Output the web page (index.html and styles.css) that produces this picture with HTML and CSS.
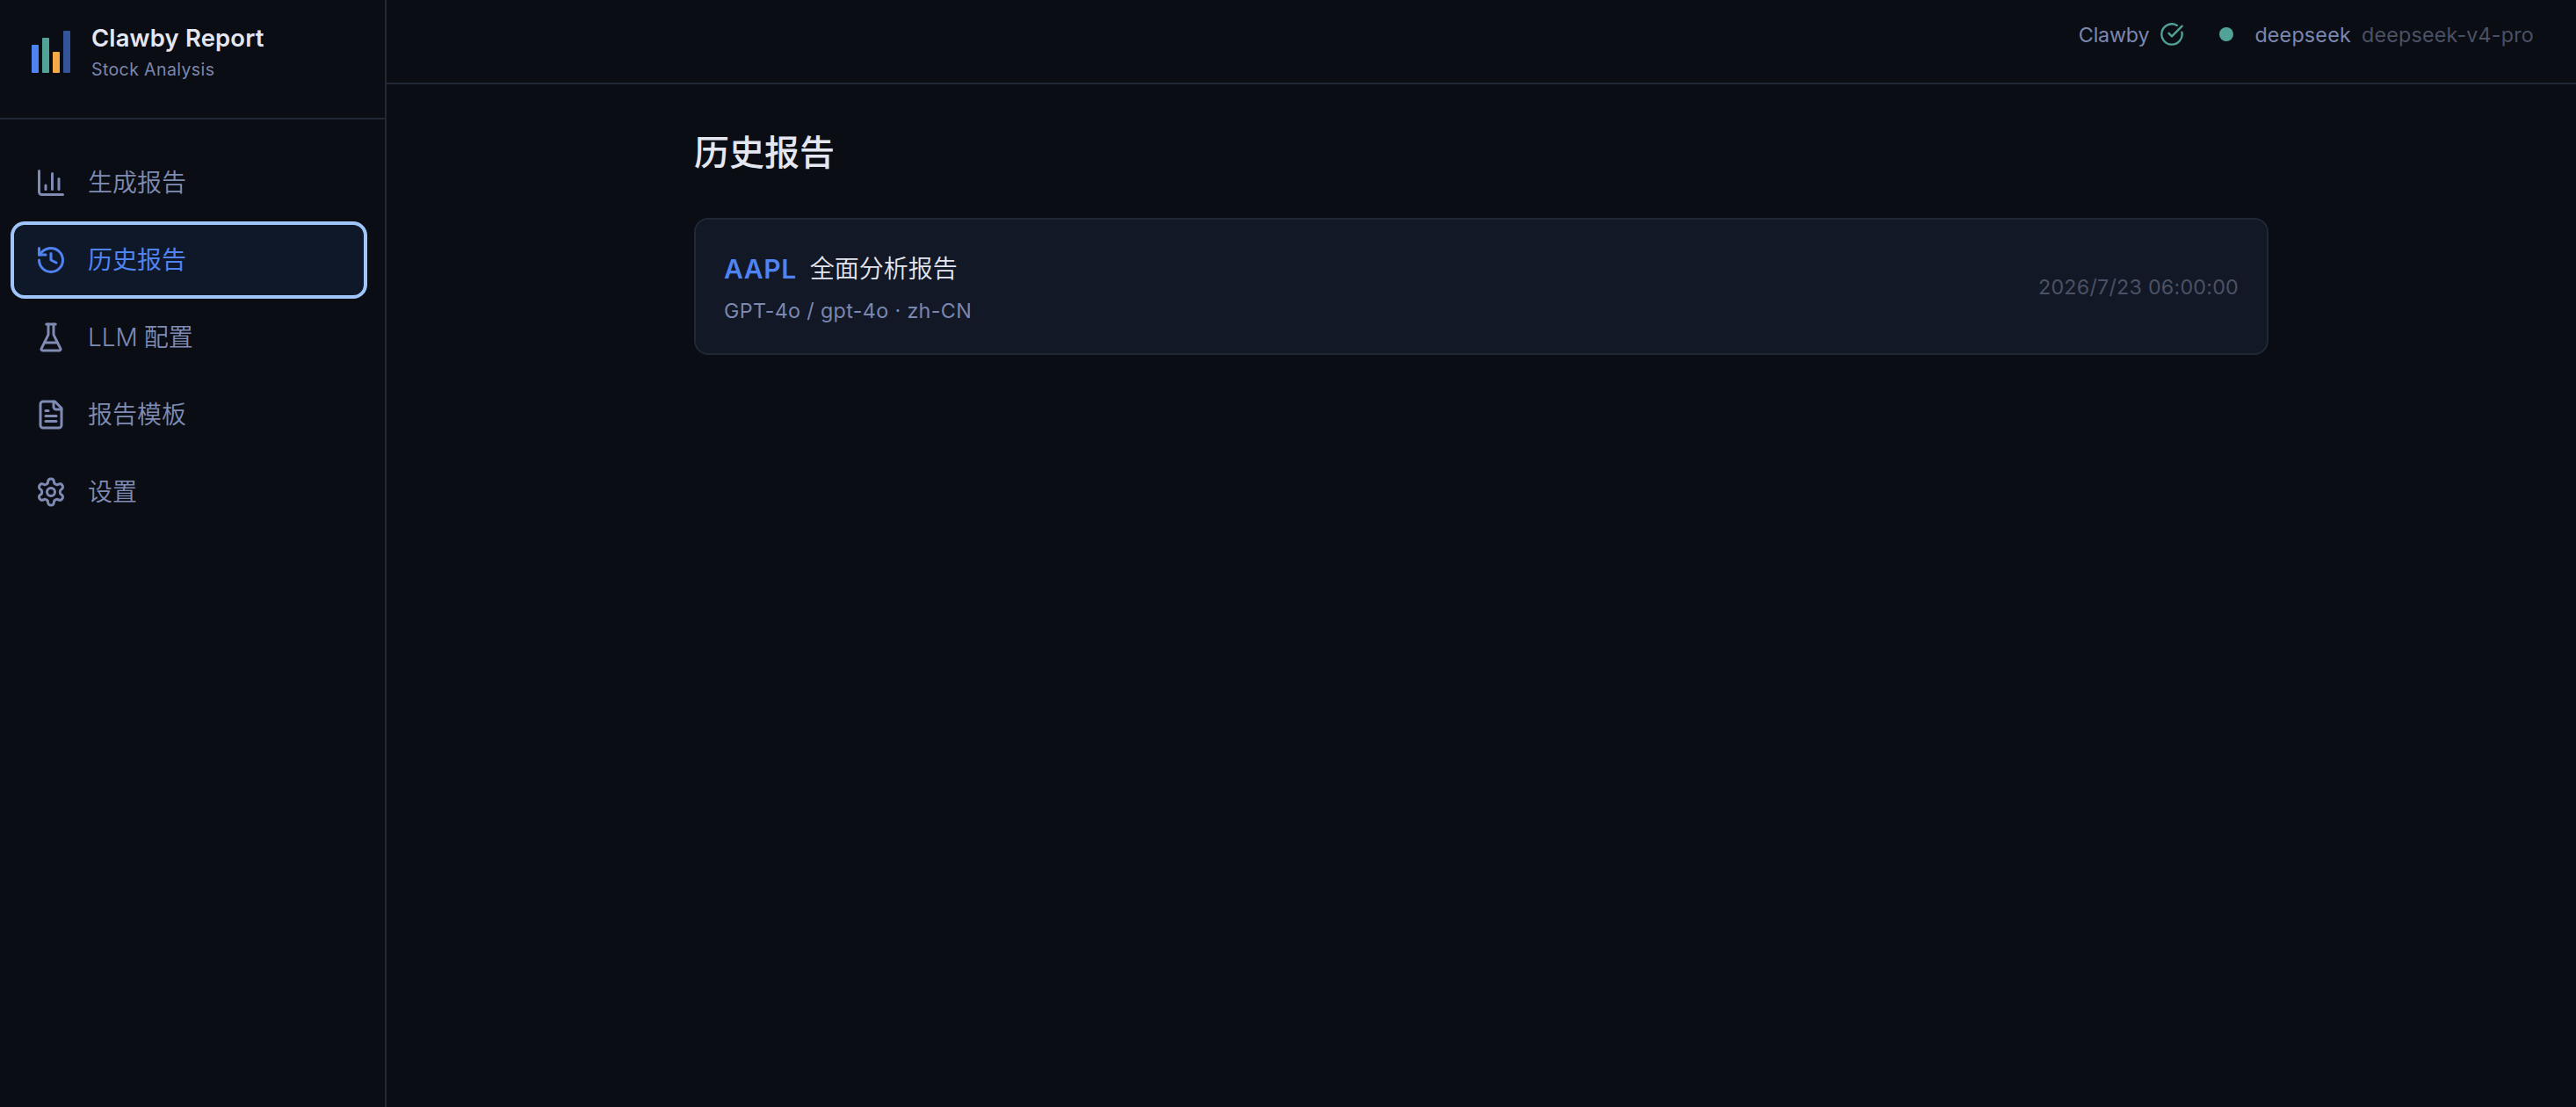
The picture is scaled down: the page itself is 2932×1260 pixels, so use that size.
FILE: index.html
```html
<!DOCTYPE html>
<html lang="zh-CN">
<head>
<meta charset="utf-8">
<title>Clawby Report</title>
<link rel="stylesheet" href="styles.css">
</head>
<body>
<div class="app">
  <aside class="sidebar">
    <div class="brand">
      <svg class="brand-logo" viewBox="0 0 44 48">
        <rect x="0" y="16" width="8" height="32" rx="1" fill="#4f83f1"/>
        <rect x="12" y="8" width="8" height="40" rx="1" fill="#52a397"/>
        <rect x="24" y="24" width="8" height="24" rx="1" fill="#f4ab47"/>
        <rect x="36" y="0" width="8" height="48" rx="1" fill="#335499"/>
      </svg>
      <div class="brand-text">
        <div class="brand-name">Clawby Report</div>
        <div class="brand-sub">Stock Analysis</div>
      </div>
    </div>
    <nav class="nav">
      <a class="nav-item">
        <svg class="icon" viewBox="0 0 24 24"><path d="M3 3v16a2 2 0 0 0 2 2h16"/><path d="M18 17V9"/><path d="M13 17V5"/><path d="M8 17v-3"/></svg>
        <span class="nav-label">生成报告</span>
      </a>
      <a class="nav-item nav-item-active">
        <svg class="icon" viewBox="0 0 24 24"><path d="M3 12a9 9 0 1 0 9-9 9.75 9.75 0 0 0-6.74 2.74L3 8"/><path d="M3 3v5h5"/><path d="M12 7v5l4 2"/></svg>
        <span class="nav-label">历史报告</span>
      </a>
      <a class="nav-item">
        <svg class="icon" viewBox="0 0 24 24"><path d="M10 2v7.527a2 2 0 0 1-.211.896L4.72 20.55a1 1 0 0 0 .9 1.45h12.76a1 1 0 0 0 .9-1.45l-5.069-10.127A2 2 0 0 1 14 9.527V2"/><path d="M8.5 2h7"/><path d="M7 16h10"/></svg>
        <span class="nav-label">LLM 配置</span>
      </a>
      <a class="nav-item">
        <svg class="icon" viewBox="0 0 24 24"><path d="M15 2H6a2 2 0 0 0-2 2v16a2 2 0 0 0 2 2h12a2 2 0 0 0 2-2V7Z"/><path d="M14 2v4a2 2 0 0 0 2 2h4"/><path d="M10 9H8"/><path d="M16 13H8"/><path d="M16 17H8"/></svg>
        <span class="nav-label">报告模板</span>
      </a>
      <a class="nav-item">
        <svg class="icon" viewBox="0 0 24 24"><path d="M12.22 2h-.44a2 2 0 0 0-2 2v.18a2 2 0 0 1-1 1.73l-.43.25a2 2 0 0 1-2 0l-.15-.08a2 2 0 0 0-2.73.73l-.22.38a2 2 0 0 0 .73 2.73l.15.1a2 2 0 0 1 1 1.72v.51a2 2 0 0 1-1 1.74l-.15.09a2 2 0 0 0-.73 2.73l.22.38a2 2 0 0 0 2.73.73l.15-.08a2 2 0 0 1 2 0l.43.25a2 2 0 0 1 1 1.73V20a2 2 0 0 0 2 2h.44a2 2 0 0 0 2-2v-.18a2 2 0 0 1 1-1.73l.43-.25a2 2 0 0 1 2 0l.15.08a2 2 0 0 0 2.73-.73l.22-.39a2 2 0 0 0-.73-2.73l-.15-.08a2 2 0 0 1-1-1.74v-.5a2 2 0 0 1 1-1.74l.15-.09a2 2 0 0 0 .73-2.73l-.22-.38a2 2 0 0 0-2.73-.73l-.15.08a2 2 0 0 1-2 0l-.43-.25a2 2 0 0 1-1-1.73V4a2 2 0 0 0-2-2z"/><circle cx="12" cy="12" r="3"/></svg>
        <span class="nav-label">设置</span>
      </a>
    </nav>
  </aside>
  <div class="content">
    <header class="topbar">
      <div class="status">
        <span class="status-name">Clawby</span>
        <svg class="icon status-icon" viewBox="0 0 24 24"><path d="M21.801 10A10 10 0 1 1 17 3.335"/><path d="m9 11 3 3L22 4"/></svg>
      </div>
      <div class="model">
        <span class="dot"></span>
        <span class="provider">deepseek</span>
        <span class="model-name">deepseek-v4-pro</span>
      </div>
    </header>
    <main class="page">
      <h1 class="page-title">历史报告</h1>
      <article class="card">
        <div class="card-body">
          <div class="card-head"><span class="ticker">AAPL</span><span class="card-title">全面分析报告</span></div>
          <div class="card-meta">GPT-4o / gpt-4o · zh-CN</div>
        </div>
        <time class="card-time">2026/7/23 06:00:00</time>
      </article>
    </main>
  </div>
</div>
</body>
</html>
```
FILE: styles.css
```css
* { box-sizing: border-box; }

body {
  margin: 0;
  background: #0a0d14;
  color: #e4e7f1;
  font-family: Inter, "Noto Sans CJK SC", sans-serif;
  font-size: 28px;
}

.app { display: flex; height: 1260px; }

.sidebar {
  flex: none;
  width: 440px;
  border-right: 2px solid #202835;
}

.brand {
  display: flex;
  gap: 24px;
  height: 136px;
  padding: 23px 36px 0;
  border-bottom: 2px solid #202835;
}

.brand-logo { width: 44px; height: 48px; margin-top: 12px; }
.brand-name { font-weight: 600; font-size: 27.4px; line-height: 40px; letter-spacing: 0.18px; }
.brand-sub { color: #7b87ae; font-size: 19.5px; line-height: 32px; letter-spacing: 0.4px; }

.nav { display: flex; flex-direction: column; gap: 8px; padding: 32px 24px 0 16px; }

.nav-item {
  display: flex;
  align-items: center;
  gap: 24px;
  height: 80px;
  padding: 0 24px;
  border-radius: 12px;
  color: #7f8bb3;
}

.nav-label { padding-bottom: 4px; font-weight: 350; word-spacing: -1px; }

.nav-item-active {
  background: #0f1829;
  color: #4f83f1;
  outline: 4px solid #9fc5fb;
}
.nav-item-active .nav-label { font-weight: 400; }

.icon {
  flex: none;
  width: 36px;
  height: 36px;
  fill: none;
  stroke: currentColor;
  stroke-width: 2;
  stroke-linecap: round;
  stroke-linejoin: round;
}

.content { flex: 1; min-width: 0; }

.topbar {
  display: flex;
  justify-content: flex-end;
  gap: 40px;
  height: 96px;
  padding: 21px 48px 0;
  border-bottom: 2px solid #202835;
  font-size: 23.3px;
  line-height: 36px;
  letter-spacing: 0.2px;
  color: #7b87ae;
}

.status, .model { display: flex; align-items: center; height: 36px; }
.status { gap: 12px; }
.status-name { letter-spacing: -0.2px; }
.status-name, .provider, .model-name { padding-top: 1px; }
.status-icon { width: 28px; height: 28px; color: #52a397; }
.dot { width: 16px; height: 16px; border-radius: 50%; background: #52a397; margin-right: 24px; }
.provider { margin-right: 12px; }
.model-name { color: #4a5164; }

.page { width: 1792px; margin: 0 auto; padding-top: 48px; }
.page-title { margin: 0 0 44px; font-size: 40px; line-height: 60px; font-weight: 500; }

.card {
  display: flex;
  align-items: center;
  justify-content: space-between;
  height: 156px;
  padding: 0 32px;
  border: 2px solid #202835;
  border-radius: 16px;
  background: #121825;
}

.card-body { padding-top: 4px; }
.card-head { display: flex; align-items: center; gap: 15px; line-height: 44px; }
.ticker { color: #4f83f1; font-size: 30px; font-weight: 600; letter-spacing: 0.6px; }
.card-title { font-weight: 350; }
.card-meta { margin-top: 8px; color: #7b87ae; font-size: 23.3px; line-height: 36px; letter-spacing: 0.35px; }
.card-time { color: #4a5164; font-size: 23.3px; letter-spacing: 0.22px; }
```
